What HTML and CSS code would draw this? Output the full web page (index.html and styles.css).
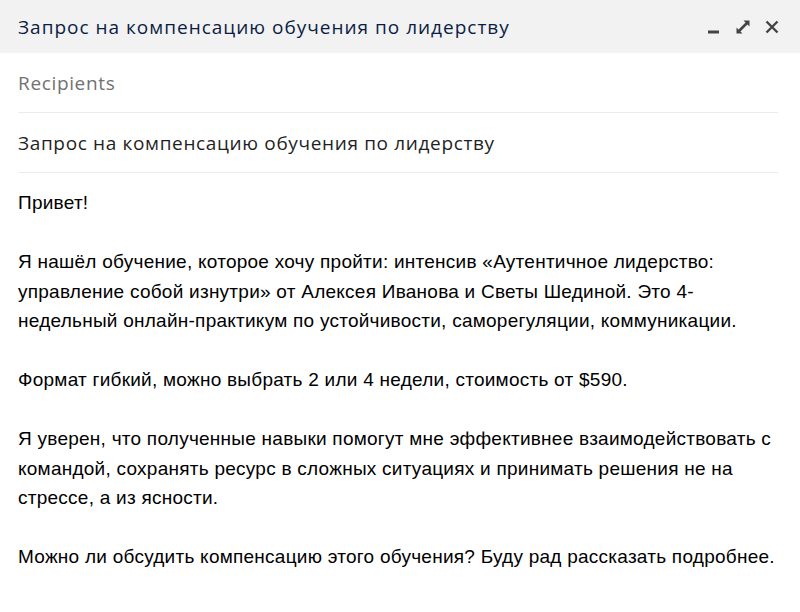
FILE: index.html
```html
<!DOCTYPE html>
<html lang="ru">
<head>
    <meta charset="UTF-8">
    <title>Новое сообщение</title>
    <link rel="stylesheet" href="styles.css">
</head>
<body>
    <div class="compose">
        <!-- Header -->
        <div class="compose-header">
            <h1 class="compose-title">Запрос на компенсацию обучения по лидерству</h1>
            <div class="header-actions">
                <svg class="icon" viewBox="0 0 16 16" width="16" height="16">
                    <rect x="2" y="11.5" width="11" height="3" fill="#444"/>
                </svg>
                <svg class="icon" viewBox="0 0 18 18" width="18" height="18">
                    <path d="M9.5 2.5H15.5V8.5Z M2.5 9.5V15.5H8.5Z" fill="#444"/>
                    <path d="M14 4L4 14" stroke="#444" stroke-width="2.6" fill="none"/>
                </svg>
                <svg class="icon" viewBox="0 0 16 16" width="16" height="16">
                    <path d="M2.5 2.5l11 11M13.5 2.5l-11 11" stroke="#444" stroke-width="2.4" fill="none"/>
                </svg>
            </div>
        </div>

        <!-- Fields -->
        <div class="compose-fields">
            <div class="field field-recipients">Recipients</div>
            <div class="field field-subject">Запрос на компенсацию обучения по лидерству</div>
        </div>

        <!-- Body -->
        <div class="compose-body">
            <p>Привет!</p>
            <p>Я нашёл обучение, которое хочу пройти: интенсив «Аутентичное лидерство: управление собой изнутри» от Алексея Иванова и Светы Шединой. Это 4-недельный онлайн-практикум по устойчивости, саморегуляции, коммуникации.</p>
            <p>Формат гибкий, можно выбрать 2 или 4 недели, стоимость от $590.</p>
            <p>Я уверен, что полученные навыки помогут мне эффективнее взаимодействовать с командой, сохранять ресурс в сложных ситуациях и принимать решения не на стрессе, а из ясности.</p>
            <p>Можно ли обсудить компенсацию этого обучения? Буду рад рассказать подробнее.</p>
        </div>
    </div>
</body>
</html>
```

FILE: styles.css
```css
* {
    margin: 0;
    padding: 0;
    box-sizing: border-box;
}

body {
    font-family: 'Liberation Sans', Arial, sans-serif;
    background: #ffffff;
    color: #000000;
    width: 800px;
    height: 612px;
    overflow: hidden;
}

/* Header */
.compose-header {
    height: 53px;
    background: #f2f2f2;
    display: flex;
    align-items: center;
    justify-content: space-between;
    padding: 0 18px;
}

.compose-title {
    font-family: 'Open Sans', 'Liberation Sans', sans-serif;
    font-size: 19px;
    font-weight: 500;
    letter-spacing: 1px;
    color: #0b1d45;
}

.header-actions {
    display: flex;
    align-items: center;
    gap: 12px;
    margin-right: 2px;
}

.icon {
    display: block;
}

/* Fields */
.compose-fields {
    padding: 0 22px 0 18px;
}

.field {
    height: 60px;
    display: flex;
    align-items: center;
    font-family: 'Open Sans', 'Liberation Sans', sans-serif;
    font-size: 19px;
    letter-spacing: 0.65px;
    border-bottom: 1px solid #ececec;
}

.field-recipients {
    color: #717171;
}

.field-subject {
    color: #1f1f1f;
}

/* Body */
.compose-body {
    padding: 15px 22px 0 18px;
    font-size: 19px;
    letter-spacing: 0.25px;
    line-height: 29.5px;
}

.compose-body p {
    margin-bottom: 29.5px;
}
```
